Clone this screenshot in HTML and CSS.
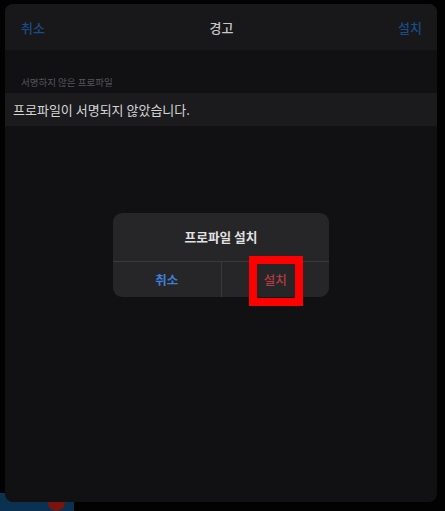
FILE: index.html
```html
<!DOCTYPE html>
<html>
<head>
<meta charset="utf-8">
<title>프로파일 설치</title>
<link rel="stylesheet" href="styles.css">
</head>
<body>
<div class="taskbar"><span class="badge"></span></div>
<div class="sheet">
	<div class="navbar">
		<span class="nav_btn">취소</span>
		<span class="nav_title">경고</span>
		<span class="nav_btn">설치</span>
	</div>
	<div class="section_head">서명하지 않은 프로파일</div>
	<div class="row">프로파일이 서명되지 않았습니다.</div>

	<div class="alert">
		<div class="alert_title">프로파일 설치</div>
		<div class="alert_btns">
			<span class="alert_btn cancel">취소</span>
			<span class="alert_btn install">설치</span>
		</div>
	</div>
	<div class="highlight"></div>
</div>
</body>
</html>
```

FILE: styles.css
```css
html, body{
	margin:0;
	padding:0;
	background:#020202;
	height:511px;
	overflow:hidden;
	font-family:"Noto Sans CJK KR", "Noto Sans", sans-serif;
}
body{
	position:relative;
	padding:4px 8px 0 5px;
	box-sizing:border-box;
}
/* bit of the desktop showing under the sheet */
.taskbar{
	position:absolute;
	left:0;
	top:493px;
	width:74px;
	height:18px;
	background:#0b3150;
}
.badge{
	position:absolute;
	left:48px;
	top:1px;
	width:17px;
	height:17px;
	border-radius:50%;
	background:#7a1410;
}
.sheet{
	position:relative;
	height:498px;
	background:#111113;
	border-radius:8px;
	overflow:hidden;
}
.navbar{
	height:46px;
	background:#18181a;
	display:flex;
	align-items:center;
	justify-content:space-between;
	padding:0 15px 0 16px;
	box-sizing:border-box;
	font-size:13px;
}
.nav_btn{
	color:#1a4c88;
	font-weight:500;
}
.nav_title{
	color:#c8c8ca;
	font-weight:500;
}
.section_head{
	padding:25px 0 0 16px;
	height:14px;
	font-size:9.5px;
	color:#55555a;
	line-height:14px;
}
.row{
	margin-top:4px;
	height:33px;
	background:#1b1b1d;
	color:#d6d6d8;
	font-size:13px;
	line-height:33px;
	padding-left:8px;
}
.alert{
	position:absolute;
	left:108px;
	top:209px;
	width:216px;
	height:84px;
	background:#262628;
	border-radius:9px;
	overflow:hidden;
}
.alert_title{
	height:48px;
	line-height:48px;
	text-align:center;
	color:#e2e2e4;
	font-size:12.7px;
	font-weight:700;
	border-bottom:1px solid #3a3a3c;
}
.alert_btns{
	display:flex;
	height:35px;
}
.alert_btn{
	flex:1;
	text-align:center;
	line-height:35px;
	font-size:12.5px;
	font-weight:700;
}
.cancel{
	color:#3f7fd6;
	border-right:1px solid #3a3a3c;
}
.install{
	color:#b43c3c;
	font-weight:500;
}
.highlight{
	position:absolute;
	left:244px;
	top:252px;
	width:38px;
	height:34px;
	border:8px solid #fe0000;
}
```
